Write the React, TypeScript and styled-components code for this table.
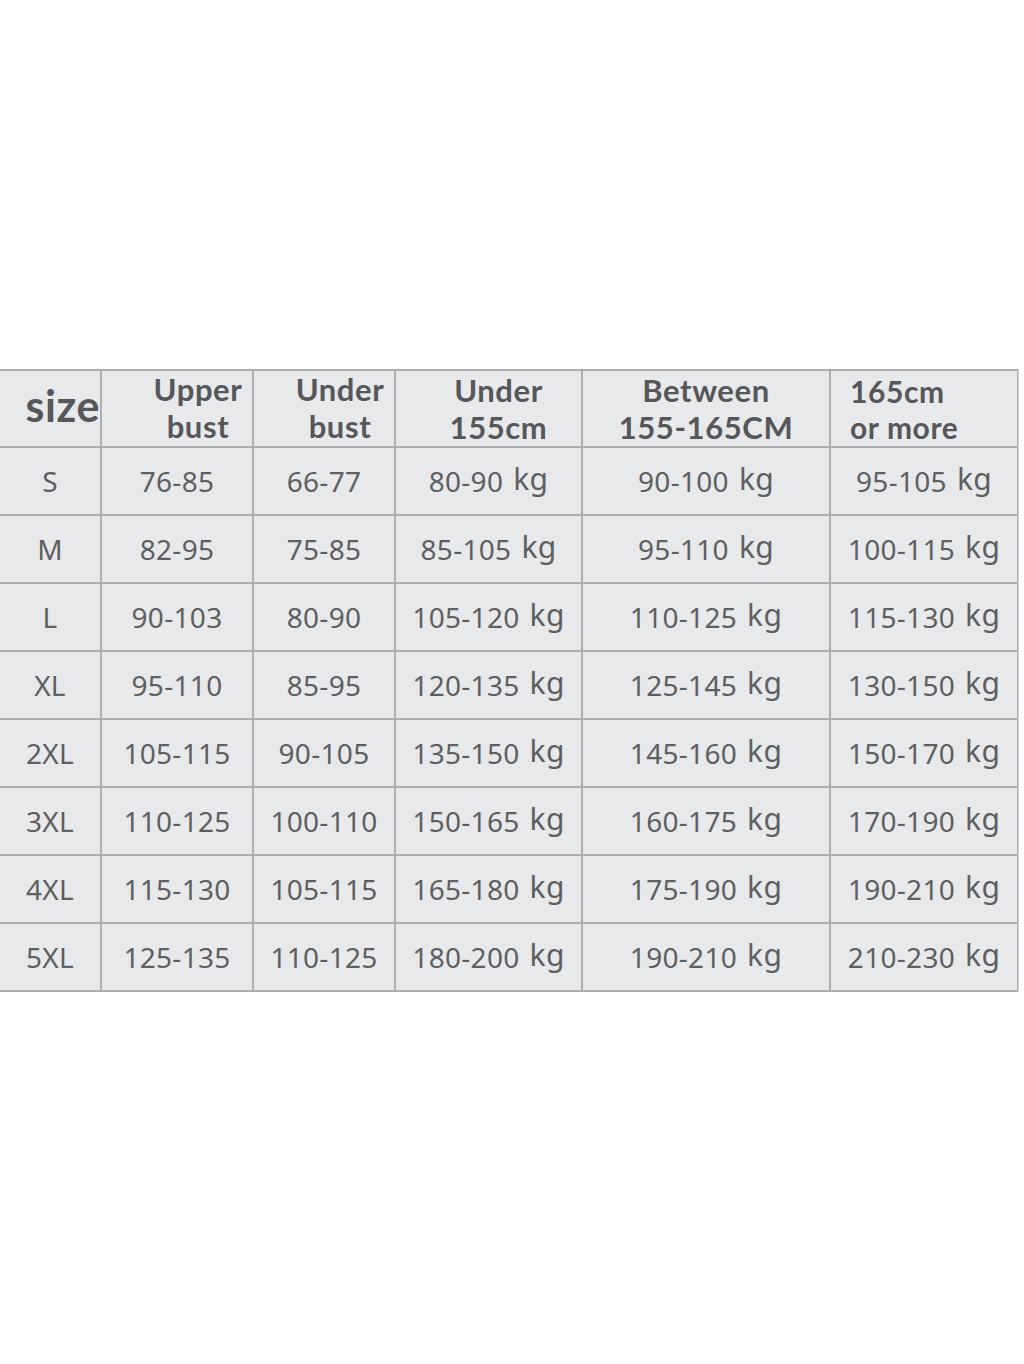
import React from "react";
import styled, { createGlobalStyle } from "styled-components";

const GlobalStyle = createGlobalStyle`
  html, body {
    margin: 0;
    padding: 0;
    background: #ffffff;
  }
  body {
    width: 1024px;
    height: 1364px;
    font-family: "Noto Sans", "Open Sans", "Liberation Sans", sans-serif;
  }
`;

const Page = styled.div`
  width: 1024px;
  height: 1364px;
  padding-top: 369px;
  box-sizing: border-box;
  background: #ffffff;
`;

const SizeTable = styled.div`
  width: 1019px;
  display: grid;
  grid-template-columns: 100px 150px 140px 185px 246px 186px;
  grid-template-rows: 75px repeat(8, 66px);
  column-gap: 2px;
  row-gap: 2px;
  padding: 2px 2px 2px 0;
  box-sizing: border-box;
  background: #aeaeb1;
  border-right: 1px solid #d6d6d8;
`;

type Align = "center" | "start" | "end";

const HeadCell = styled.div<{
  $big?: boolean;
  $tight?: boolean;
  $align?: Align;
  $shift?: number;
  $lift?: number;
}>`
  background: #e8e9eb;
  display: flex;
  flex-direction: column;
  align-items: ${(p) =>
    p.$align === "start" ? "flex-start" : p.$align === "end" ? "flex-end" : "center"};
  justify-content: center;
  padding-left: ${(p) => p.$shift ?? 0}px;
  padding-bottom: ${(p) => p.$lift ?? 0}px;
  box-sizing: border-box;
  color: #56575a;
  font-family: Lato, "Open Sans", sans-serif;
  font-weight: 700;
  font-size: ${(p) => (p.$big ? "43px" : p.$tight ? "30px" : "31px")};
  line-height: ${(p) => (p.$tight ? "36px" : "37px")};
  letter-spacing: 0.6px;
  white-space: nowrap;
`;

const HeadText = styled.span<{ $align?: Align }>`
  text-align: ${(p) => (p.$align === "start" ? "left" : "center")};
`;

const Cell = styled.div`
  background: #e8e9eb;
  display: flex;
  align-items: center;
  justify-content: center;
  color: #5e5f61;
  font-family: "Noto Sans", sans-serif;
  font-weight: 400;
  font-size: 28px;
  letter-spacing: 0.3px;
  white-space: nowrap;
`;

const Unit = styled.span`
  font-size: 30px;
  margin-left: 10px;
  position: relative;
  top: -3px;
`;

const headers: {
  lines: string[];
  big?: boolean;
  tight?: boolean;
  align?: Align;
  shift?: number;
  lift?: number;
}[] = [
  { lines: ["size"], big: true, align: "end", lift: 6 },
  { lines: ["Upper", "bust"], shift: 42, lift: 1 },
  { lines: ["Under", "bust"], shift: 32, lift: 1 },
  { lines: ["Under", "155cm"], shift: 20 },
  { lines: ["Between", "155-165CM"] },
  { lines: ["165cm", "or more"], tight: true, align: "start", shift: 19 },
];

const rows: string[][] = [
  ["S", "76-85", "66-77", "80-90", "90-100", "95-105"],
  ["M", "82-95", "75-85", "85-105", "95-110", "100-115"],
  ["L", "90-103", "80-90", "105-120", "110-125", "115-130"],
  ["XL", "95-110", "85-95", "120-135", "125-145", "130-150"],
  ["2XL", "105-115", "90-105", "135-150", "145-160", "150-170"],
  ["3XL", "110-125", "100-110", "150-165", "160-175", "170-190"],
  ["4XL", "115-130", "105-115", "165-180", "175-190", "190-210"],
  ["5XL", "125-135", "110-125", "180-200", "190-210", "210-230"],
];

const App = () => {
  return (
    <Page>
      <GlobalStyle />
      <SizeTable>
        {headers.map((h, i) => (
          <HeadCell
            key={i}
            $big={h.big}
            $tight={h.tight}
            $align={h.align}
            $shift={h.shift}
            $lift={h.lift}
          >
            <HeadText $align={h.align}>
              {h.lines.map((l, j) => (
                <React.Fragment key={l}>
                  {j > 0 && <br />}
                  {l}
                </React.Fragment>
              ))}
            </HeadText>
          </HeadCell>
        ))}
        {rows.map((r) =>
          r.map((v, i) => (
            <Cell key={r[0] + i}>
              {v}
              {i >= 3 && <Unit>kg</Unit>}
            </Cell>
          ))
        )}
      </SizeTable>
    </Page>
  );
};

export default App;
